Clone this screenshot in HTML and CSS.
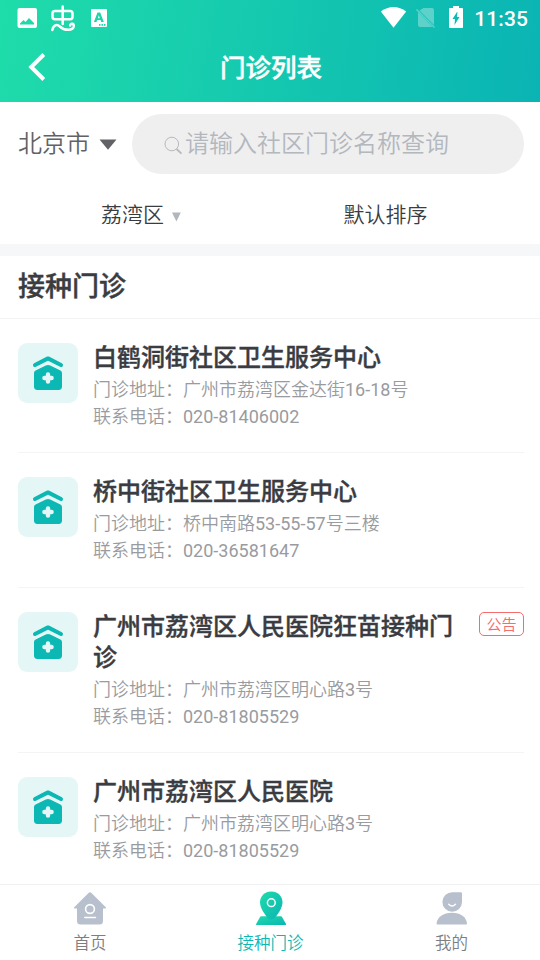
FILE: index.html
```html
<!DOCTYPE html>
<html lang="zh-CN">
<head>
<meta charset="utf-8">
<title>门诊列表</title>
<link rel="stylesheet" href="styles.css">
</head>
<body>
<svg class="defs" width="0" height="0" aria-hidden="true">
  <symbol id="clinic" viewBox="0 0 60 60">
    <path d="M17 22 30 15.400 43 22" fill="none" stroke="#0bb8b3" stroke-width="4" stroke-linecap="round" stroke-linejoin="round"/>
    <path d="M27.800 22.600q2.200-1.200 4.400 0l10.200 4.800q1.600.8 1.600 2.600v13.500a3.400 3.400 0 0 1-3.400 3.400H19.400a3.400 3.400 0 0 1-3.400-3.400V30q0-1.800 1.600-2.600z" fill="#0bb8b3"/>
    <path d="M30 31.400v7.200M26.400 35h7.200" stroke="#e4f7f6" stroke-width="4.400" stroke-linecap="round"/>
  </symbol>
</svg>
<div class="app">
  <header class="header">
    <div class="status">
      <svg width="112" height="36" viewBox="0 0 112 36" fill="#fff">
        <path fill-rule="evenodd" d="M19.500 8h15.500a2 2 0 0 1 2 2v16a2 2 0 0 1-2 2H19.500a2 2 0 0 1-2-2V10a2 2 0 0 1 2-2zM20 24.500h14V23l-5-5-3.500 4-2-2-3.500 3.500z"/>
        <g fill="none" stroke="#fff" stroke-width="2.500" stroke-linecap="round" stroke-linejoin="round">
          <rect x="52.500" y="11" width="20" height="8.200" rx="2.500"/>
          <path d="M62.700 6.500v17.500M52.300 30c1.200-5 4.500-6.300 7.500-3.500 4.500 4.500 13.500 4.500 14-.3.200-3-3.600-3.200-3.600-.7"/>
        </g>
        <path fill-rule="evenodd" d="M92 9h14a1 1 0 0 1 1 1v16a1 1 0 0 1-1 1H92a1 1 0 0 1-1-1V10a1 1 0 0 1 1-1zm5.500 3.500-3.600 9.500h2.600l.6-1.900h3.500l.6 1.900h2.600l-3.600-9.500zm1.350 2.700 1 3h-2zM99 24v1.700h1.500V24zm2.500 0v1.700h1.500V24zm2.500 0v1.700h1.500V24z"/>
      </svg>
      <div class="status-right">
        <svg width="90" height="36" viewBox="0 0 90 36" fill="#fff">
          <path d="M0.800 11.500C8.500 5.500 18.500 5.500 26.200 11.500L13.500 27.700z"/>
          <g opacity=".32"><path d="M43.500 8H52a2 2 0 0 1 2 2v15L39.500 10.500zM38 12v13a2 2 0 0 0 2 2h12.500z"/><path d="m36.500 9.500 18 18" stroke="#fff" stroke-width="1.500"/></g>
          <path fill-rule="evenodd" d="M73 6h6v2h3.200a.8.800 0 0 1 .8.800v18.400a.8.800 0 0 1-.8.800H69.800a.8.800 0 0 1-.8-.8V8.800a.8.800 0 0 1 .8-.8H73zm4 6-4.500 7h2.500l-.5 6 5-8h-2.600l.6-5z"/>
        </svg>
        <span class="clock">11:35</span>
      </div>
    </div>
    <div class="nav">
      <svg class="back" width="18" height="28" viewBox="0 0 18 28"><path d="M15.800 1.500 3.200 14l12.600 12.500" fill="none" stroke="#fff" stroke-width="4"/></svg>
      <h1>门诊列表</h1>
    </div>
  </header>

  <div class="search-row">
    <div class="city"><span>北京市</span><svg width="18" height="11" viewBox="0 0 18 11"><path d="M.5.500h17L9 10.800z" fill="#606266"/></svg></div>
    <div class="search">
      <svg width="20" height="20" viewBox="0 0 20 20" fill="none" stroke="#b6b9be"><circle cx="7.800" cy="8" r="6.800" stroke-width="1"/><path d="m12.500 13 5 4.700" stroke-width="1.800"/></svg>
      <span>请输入社区门诊名称查询</span>
    </div>
  </div>

  <div class="filters">
    <div class="filter">荔湾区<svg width="9" height="10" viewBox="0 0 9 10"><path d="M0 .5h8.800L4.400 9.500z" fill="#b3b6bc"/></svg></div>
    <div class="filter">默认排序</div>
  </div>

  <h2 class="section-title">接种门诊</h2>

  <main class="list">
    <article class="item">
      <svg class="thumb"><use href="#clinic"/></svg>
      <div class="info"><h3>白鹤洞街社区卫生服务中心</h3><p>门诊地址：广州市荔湾区金达街16-18号</p><p>联系电话：020-81406002</p></div>
    </article>
    <article class="item">
      <svg class="thumb"><use href="#clinic"/></svg>
      <div class="info"><h3>桥中街社区卫生服务中心</h3><p>门诊地址：桥中南路53-55-57号三楼</p><p>联系电话：020-36581647</p></div>
    </article>
    <article class="item">
      <svg class="thumb"><use href="#clinic"/></svg>
      <div class="info"><h3>广州市荔湾区人民医院狂苗接种门诊</h3><p>门诊地址：广州市荔湾区明心路3号</p><p>联系电话：020-81805529</p></div>
      <span class="tag">公告</span>
    </article>
    <article class="item">
      <svg class="thumb"><use href="#clinic"/></svg>
      <div class="info"><h3>广州市荔湾区人民医院</h3><p>门诊地址：广州市荔湾区明心路3号</p><p>联系电话：020-81805529</p></div>
    </article>
  </main>

  <nav class="tabbar">
    <div class="tab">
      <svg width="36" height="36" viewBox="0 0 36 36"><path d="M16.800 2.800q1.200-1.200 2.400 0L34 17.500q.3 1-.8 1H31v12.500a3.500 3.500 0 0 1-3.500 3.500h-19A3.500 3.500 0 0 1 5 31V18.500H2.800q-1.100 0-.8-1z" fill="#b8c0ce"/><circle cx="18" cy="19" r="4.400" fill="none" stroke="#fff" stroke-width="1.600"/><path d="M12.800 27.500h10.700" stroke="#fff" stroke-width="1.500" stroke-linecap="round"/></svg>
      <span>首页</span>
    </div>
    <div class="tab active">
      <svg width="36" height="36" viewBox="0 0 36 36">
        <defs><linearGradient id="pin" x1="0" y1="0" x2="1" y2="1"><stop offset="0" stop-color="#1fdcaa"/><stop offset="1" stop-color="#0ab4b4"/></linearGradient></defs>
        <path d="M8 26.200h20q.7 0 1 .7l4 7.200q.4.900-.6.900H3.700q-1 0-.6-.9l4-7.200q.3-.7.900-.7z" fill="url(#pin)"/>
        <path d="M18.200 1.500c6.300 0 11.300 4.700 11.300 10.800 0 5.700-5 13-8.300 16q-3 2.500-6 0C12 25.300 7 18 7 12.300 7 6.200 12 1.500 18.200 1.500z" fill="url(#pin)"/>
        <circle cx="18.300" cy="12.700" r="3.900" fill="none" stroke="#fff" stroke-width="1.500"/>
      </svg>
      <span>接种门诊</span>
    </div>
    <div class="tab">
      <svg width="36" height="36" viewBox="0 0 36 36" fill="#b8c0ce"><path d="M18.200 2.200H27a1 1 0 0 1 1 1v9a9.800 9.800 0 1 1-9.800-10z"/><path d="M18 22.800c8.500 0 14.500 4.500 15 10.700q0 1-1 1H3.500q-1 0-1-1C3 27.300 9.500 22.800 18 22.800z"/><path d="M14.800 14.200q3.300 3.600 6.600 0" fill="none" stroke="#fff" stroke-width="1.500" stroke-linecap="round"/></svg>
      <span>我的</span>
    </div>
  </nav>
</div>
</body>
</html>
```

FILE: styles.css
```css
* { box-sizing: border-box; }
body, h1, h2, h3, p { margin: 0; }
body { font-family: Roboto, "Noto Sans CJK SC DemiLight", "Noto Sans CJK SC", sans-serif; font-weight: 400; color: #3a3c41; background: #fff; }
h1, h2, h3 { font-family: Roboto, "Noto Sans CJK SC", sans-serif; font-weight: 500; -webkit-text-stroke: .4px currentColor; }
svg { display: block; flex: none; }
.defs { position: absolute; }
.app { height: 960px; display: flex; flex-direction: column; overflow: hidden; }

.header { height: 102px; flex: none; color: #fff; background: linear-gradient(100deg, #1fdcaa, #0ab4b4); }
.status { height: 36px; display: flex; justify-content: space-between; }
.status-right { display: flex; align-items: center; gap: 5px; padding-right: 12px; }
.status-right svg { margin-right: -1px; margin-left: 1px; }
.clock { font-size: 21px; font-weight: 500; line-height: 36px; padding-top: 2px; letter-spacing: .1px; }
.nav { height: 66px; display: grid; grid-template-columns: 60px 1fr 58px; align-items: center; }
.back { margin-left: 28px; margin-top: -4px; }
h1 { font-size: 25.500px; line-height: 36px; text-align: center; margin-top: -2px; }

.search-row { height: 84px; flex: none; display: flex; align-items: flex-start; padding: 12px 16px 0 18px; }
.city { width: 114px; height: 60px; display: flex; align-items: center; gap: 9px; font-size: 24px; color: #606266; }
.search { flex: 1; height: 60px; border-radius: 30px; background: #efefef; display: flex; align-items: center; padding-left: 32px; font-size: 24px; color: #b3b7be; }
.search svg { margin: 3px 1px 0 0; }
.city span, .search span { margin-top: -5px; }

.filters { height: 70px; flex: none; display: grid; grid-template-columns: 234px 1fr; padding: 13px 18px 0 24px; border-bottom: 12px solid #f6f7f9; }
.filter { display: flex; align-items: center; justify-content: center; gap: 8px; font-size: 21px; line-height: 32px; height: 32px; }
.filter:last-child { padding-right: 9px; }
.filter svg { margin-top: 4px; }

.section-title { height: 63px; flex: none; padding-left: 18px; border-bottom: 1px solid #f3f4f5; font-size: 27px; line-height: 62px; }

.list { flex: 1; min-height: 0; overflow: hidden; padding: 0 16px 0 18px; }
.item { display: flex; align-items: flex-start; height: 134px; padding-top: 24px; border-bottom: 1px solid #f3f4f5; }
.item:nth-child(2) { height: 135px; }
.item:nth-child(3) { height: 165px; }
.thumb { width: 60px; height: 60px; border-radius: 9px; background: #e4f7f6; }
.info { flex: 1; padding-left: 15px; }
h3 { font-size: 24px; line-height: 31px; margin-bottom: 2px; }
.info p { font-size: 18px; line-height: 27px; color: #999b9f; }
.tag { width: 45px; height: 24px; margin-left: 10px; border: 1px solid #f56c6c; border-radius: 5px; color: #f56c6c; font-size: 15px; line-height: 24px; text-align: center; }

.tabbar { height: 76px; flex: none; display: grid; grid-template-columns: 180px 181px 181px; border-top: 1px solid #f1f1f2; }
.tab { display: flex; flex-direction: column; align-items: center; padding-top: 5px; font-size: 16.500px; line-height: 24px; color: #7d7e80; }
.tab span { margin-top: 6px; }
.active { color: #0bb8b3; }
```
